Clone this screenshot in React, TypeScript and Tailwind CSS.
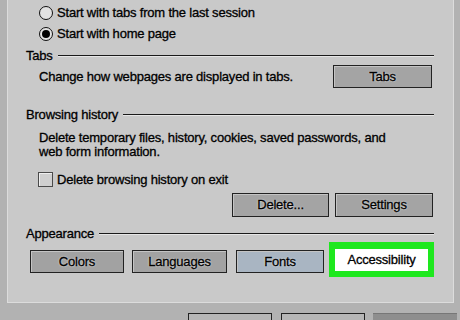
import React from 'react';

const font = { fontFamily: '"Liberation Sans", Arial, sans-serif' };

// heavier look of the scaled-up dialog text
const ink = 'text-[13px] text-black tracking-[-0.2px] [-webkit-text-stroke:0.3px_#000]';

const GroupHeader: React.FC<{ title: string; className?: string }> = ({ title, className = '' }) => (
  <div className={`flex items-center h-[16px] ${className}`}>
    <span className={`${ink} leading-[16px]`}>{title}</span>
    <div className="flex-1 ml-[5px] h-[2px] bg-[#1a1a1a] border-b border-[#e6e6e6]" />
  </div>
);

const Radio: React.FC<{ checked?: boolean; label: string; className?: string }> = ({ checked, label, className = '' }) => (
  <div className={`flex items-center h-[17px] pl-[13px] ${className}`}>
    <span className="w-[14px] h-[14px] rounded-full border border-[#111] bg-[#e2e2e2] flex items-center justify-center">
      {checked && <span className="w-[8px] h-[8px] rounded-full bg-black" />}
    </span>
    <span className={`ml-[4px] leading-[16px] ${ink}`}>{label}</span>
  </div>
);

const Btn: React.FC<{ label: string; className?: string }> = ({ label, className = '' }) => (
  <div
    className={`flex items-center justify-center border border-[#222] shadow-[inset_1px_1px_0_#c4c4c4] ${ink} [text-shadow:0_0_2px_#ffffff] ${className}`}
  >
    {label}
  </div>
);

export default function App() {
  return (
    <div className="w-[460px] h-[320px] overflow-hidden bg-[#b2b2b2]" style={font}>
      <div className="ml-[7px] mr-[6px] bg-[#c9c9c9] border-l border-r border-b border-[#dcdcdc] pl-[18px] pr-[19px] pb-[25px]">
        <Radio label="Start with tabs from the last session" className="h-[21px] pt-[4px]" />
        <Radio checked label="Start with home page" className="mt-[4px]" />

        <GroupHeader title="Tabs" className="mt-[6px]" />
        <div className="flex items-center justify-between h-[23px] mt-[1px] pl-[13px] pr-[2px]">
          <span className={ink}>Change how webpages are displayed in tabs.</span>
          <Btn label="Tabs" className="w-[99px] h-[23px] bg-[#a4a4a4]" />
        </div>

        <GroupHeader title="Browsing history" className="mt-[19px]" />
        <div className={`mt-[8px] pl-[13px] leading-[14px] ${ink}`}>
          <div>Delete temporary files, history, cookies, saved passwords, and</div>
          <div>web form information.</div>
        </div>
        <div className="flex items-center h-[15px] mt-[13px] pl-[12px]">
          <span className="w-[15px] h-[15px] border border-[#4a4a4a] bg-[#cfcfcf] shadow-[inset_1px_1px_0_#eeeeee]" />
          <span className={`ml-[4px] ${ink}`}>Delete browsing history on exit</span>
        </div>
        <div className="flex justify-end gap-[6px] mt-[6px] pr-[1px]">
          <Btn label="Delete..." className="w-[97px] h-[24px] bg-[#a4a4a4]" />
          <Btn label="Settings" className="w-[98px] h-[24px] bg-[#a4a4a4]" />
        </div>

        <GroupHeader title="Appearance" className="mt-[9px]" />
        <div className="flex items-start pl-[4px]">
          <Btn label="Colors" className="w-[95px] h-[23px] mt-[8px] bg-[#a2a2a2]" />
          <Btn label="Languages" className="w-[96px] h-[23px] mt-[8px] ml-[8px] bg-[#a2a2a2]" />
          <Btn label="Fonts" className="w-[89px] h-[23px] mt-[8px] ml-[9px] bg-[#a9b5c2]" />
          <div className="ml-[5px] w-[106px] h-[35px] bg-[#1ee81e] p-[6px] pt-[7px]">
            <div className={`w-full h-[22px] bg-white flex items-center justify-center ${ink}`}>
              Accessibility
            </div>
          </div>
        </div>
      </div>

      <div className="flex justify-end mt-[10px] pr-[3px]">
        <div className="w-[84px] h-[25px] border border-[#222] bg-[#b6b6b6]" />
        <div className="w-[84px] h-[25px] ml-[9px] border border-[#222] bg-[#b6b6b6]" />
        <div className="w-[84px] h-[25px] ml-[8px] bg-[#8e8e8e] border-t border-[#777]" />
      </div>
    </div>
  );
}
